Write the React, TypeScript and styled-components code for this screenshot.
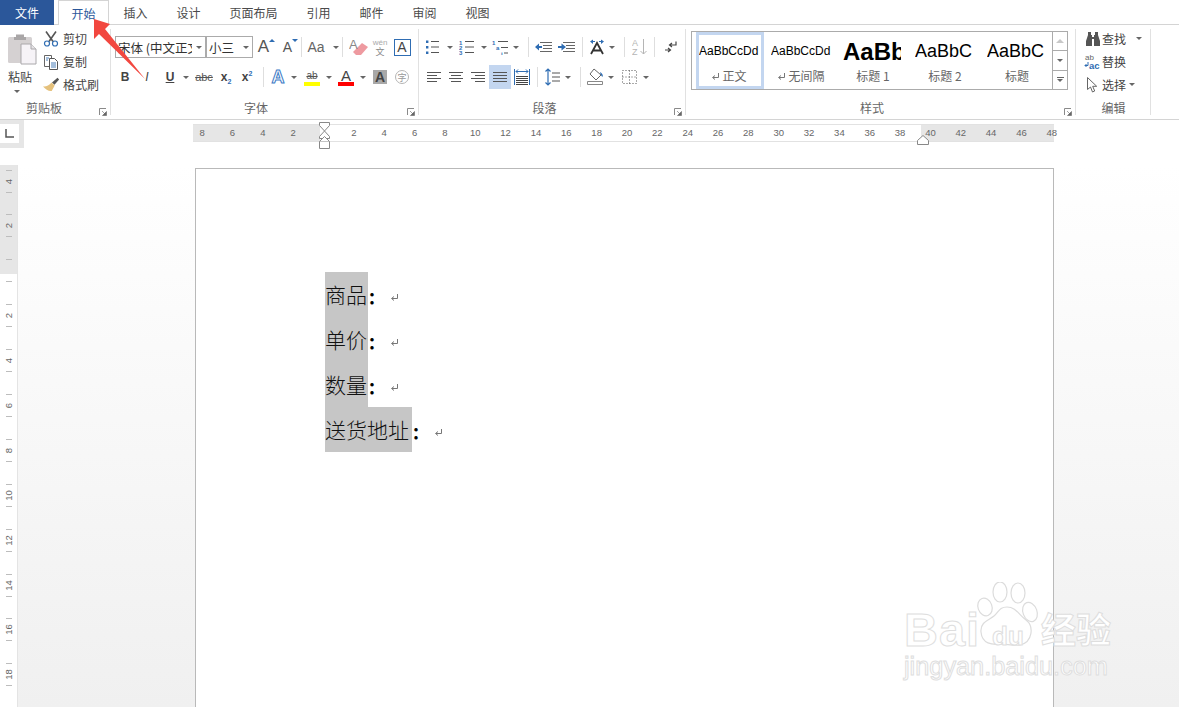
import styled, { createGlobalStyle } from "styled-components";

const CJK = `"Noto Sans CJK SC", "Liberation Sans", sans-serif`;

const hNums = ["8", "6", "4", "2", "", ...Array.from({ length: 24 }, (_, i) => String((i + 1) * 2))];
const vNums = ["4", "2", "", "2", "4", "6", "8", "10", "12", "14", "16", "18"];

const Caret = () => <CaretMark />;

const Launcher = () => (
  <LauncherBox>
    <svg width="8" height="8" viewBox="0 0 8 8">
      <path d="M.5 7V.5H7" fill="none" stroke="#8a8a8a" />
      <path d="M3 3l3 3M7.5 3.5v4h-4z" fill="#666" stroke="#666" strokeWidth=".6" />
    </svg>
  </LauncherBox>
);

const ReturnMark = () => (
  <svg width="9" height="9" viewBox="0 0 9 9">
    <path d="M7.5 1v4.5H2M4 3.5L1.5 5.5 4 7.5" fill="none" stroke="#777" />
  </svg>
);

const PasteIcon = () => (
  <svg width="30" height="32" viewBox="0 0 30 32">
    <rect x="0" y="4" width="24" height="26" rx="1.5" fill="#d5d1d2" />
    <path d="M8 4V1.500h8V4h2v3H6V4z" fill="#a9a6a7" />
    <path d="M13 11h10l5 5v15H13z" fill="#f6f3f7" stroke="#aaa8ab" />
    <path d="M23 11v5h5" fill="#e5e3e6" stroke="#aaa8ab" />
  </svg>
);

const CutIcon = () => (
  <svg width="16" height="16" viewBox="0 0 16 16">
    <path d="M3 .5l7 10M13 .5l-7 10" stroke="#555" strokeWidth="1.600" fill="none" />
    <circle cx="4" cy="12.500" r="2.500" fill="none" stroke="#2f6db3" strokeWidth="1.200" />
    <circle cx="12" cy="12.500" r="2.500" fill="none" stroke="#2f6db3" strokeWidth="1.200" />
  </svg>
);

const CopyIcon = () => (
  <svg width="16" height="16" viewBox="0 0 16 16">
    <path d="M1.500 1.500h7v11h-7z" fill="#fff" stroke="#666" />
    <path d="M6.500 4.500h5l3 3v8h-8z" fill="#fff" stroke="#555" />
    <path d="M8 9h5M8 11h5M8 13h5M3 4h3M3 6h2" stroke="#4a7fb8" />
  </svg>
);

const BrushIcon = () => (
  <svg width="18" height="16" viewBox="0 0 18 16">
    <path d="M10 5.500L15.500.8l1.600 1.700-4.600 5.200z" fill="#555" />
    <path d="M9.500 5.500l3.200 3-3 5.500c-3 .5-6-1.500-8.700-4.500 3 .5 6-1 8.500-4z" fill="#e5c17c" />
  </svg>
);

const EraserIcon = () => (
  <svg width="20" height="18" viewBox="0 0 20 18">
    <path d="M4 14l9-9 6 4-7 8H7z" fill="#ee9aa0" />
    <text x="0" y="11" fontFamily="Liberation Sans" fontSize="13" fill="#888">A</text>
  </svg>
);

const BulletIcon = () => (
  <svg width="16" height="16" viewBox="0 0 16 16">
    <path d="M1 1.500h2.400v2.400H1zM1 7h2.400v2.400H1zM1 12.500h2.400v2.400H1z" fill="#2f6db3" />
    <path d="M6 2.500h8M6 8h8M6 13.500h8" stroke="#555" />
  </svg>
);

const NumberIcon = () => (
  <svg width="16" height="16" viewBox="0 0 16 16">
    <text x="0" y="5.500" fontSize="6" fontFamily="Liberation Sans" fontWeight="700" fill="#2f6db3">1</text>
    <text x="0" y="10.500" fontSize="6" fontFamily="Liberation Sans" fontWeight="700" fill="#2f6db3">2</text>
    <text x="0" y="16" fontSize="6" fontFamily="Liberation Sans" fontWeight="700" fill="#2f6db3">3</text>
    <path d="M6 2.500h9M6 8h9M6 13.500h9" stroke="#555" />
  </svg>
);

const MultiIcon = () => (
  <svg width="18" height="16" viewBox="0 0 18 16">
    <text x="0" y="5.500" fontSize="6" fontFamily="Liberation Sans" fontWeight="700" fill="#2f6db3">1</text>
    <text x="4" y="11" fontSize="6" fontFamily="Liberation Sans" fontWeight="700" fill="#2f6db3">a</text>
    <text x="9" y="16.500" fontSize="6" fontFamily="Liberation Sans" fontWeight="700" fill="#2f6db3">i</text>
    <path d="M6 2.500h10M9 8.500h7M12 14h4" stroke="#555" />
  </svg>
);

const IndentIcon = ({ flip }: { flip?: boolean }) => (
  <svg width="18" height="12" viewBox="0 0 18 12">
    <path d="M5 1.500h12M8 4.500h9M8 7.500h9M5 10.500h12" stroke="#666" />
    {flip ? (
      <path d="M0 5h3.500V2.500L8 6l-4.500 3.500V7H0z" fill="#2f6db3" />
    ) : (
      <path d="M7 5H4V2.500L0 6l4 3.500V7h3z" fill="#2f6db3" />
    )}
  </svg>
);

const DirectionIcon = () => (
  <svg width="18" height="16" viewBox="0 0 18 16">
    <path d="M2 2.500L5 .5v1.500h2v1H5V5zM16 2.500L13 .5v1.500h-2v1h2V5z" fill="#2f6db3" />
    <path d="M3 15L9 4l6 11M5.500 11.500h7" fill="none" stroke="#333" strokeWidth="1.800" />
  </svg>
);

const SortIcon = () => (
  <svg width="16" height="18" viewBox="0 0 16 18">
    <text x="0" y="8" fontSize="9" fontFamily="Liberation Sans" fill="#b5b5b5">A</text>
    <text x="0" y="17" fontSize="9" fontFamily="Liberation Sans" fill="#b5b5b5">Z</text>
    <path d="M11.500 1v15M8.500 13l3 3 3-3" fill="none" stroke="#b5b5b5" />
  </svg>
);

const PilcrowIcon = () => (
  <svg width="14" height="14" viewBox="0 0 14 14">
    <path d="M12 1.500v3.500H6M8 3L5.500 5 8 7" fill="none" stroke="#444" strokeWidth="1.200" />
    <path d="M1 10h5M4 8l2.500 2L4 12" fill="none" stroke="#444" strokeWidth="1.200" />
  </svg>
);

const AlignIcon = ({ mode }: { mode: "left" | "center" | "right" | "justify" }) => {
  const rows: Record<string, string> = {
    left: "M0 1.500h14M0 4.500h10M0 7.500h14M0 10.500h10",
    center: "M0 1.500h14M2 4.500h10M0 7.500h14M2 10.500h10",
    right: "M0 1.500h14M4 4.500h10M0 7.500h14M4 10.500h10",
    justify: "M0 1.500h14M0 4.500h14M0 7.500h14M0 10.500h14",
  };
  return (
    <svg width="14" height="12" viewBox="0 0 14 12">
      <path d={rows[mode]} stroke="#555" />
    </svg>
  );
};

const DistributeIcon = () => (
  <svg width="16" height="16" viewBox="0 0 16 16">
    <path d="M.5 0v16M15.500 0v16" stroke="#2f6db3" />
    <path d="M2 2.500h12M4 .5L2 2.500l2 2M12 .5l2 2-2 2" fill="none" stroke="#2f6db3" />
    <path d="M2 7.500h12M2 9.500h12M2 11.500h12M2 13.500h12M2 15.500h12" stroke="#444" />
  </svg>
);

const SpacingIcon = () => (
  <svg width="16" height="18" viewBox="0 0 16 18">
    <path d="M3 1v16M.5 3.500L3 1l2.500 2.500M.5 14.500L3 17l2.500-2.500" fill="none" stroke="#2f6db3" strokeWidth="1.200" />
    <path d="M7 5h8M7 9h8M7 13h8" stroke="#555" />
  </svg>
);

const ShadeIcon = () => (
  <svg width="17" height="18" viewBox="0 0 17 18">
    <path d="M7 1l7 6-5 5-6-6z" fill="#fff" stroke="#666" />
    <path d="M13 4c2 1 3.500 3 2.500 5-1-1-2-2-2.500-5z" fill="#2f6db3" />
    <path d="M.5 13.500h15v3H.5z" fill="#fff" stroke="#888" />
  </svg>
);

const BordersIcon = () => (
  <svg width="15" height="14" viewBox="0 0 15 14">
    <path d="M.5.5h14v13H.5zM7.500.5v13M.5 7h14" fill="none" stroke="#555" strokeDasharray="1 2" />
  </svg>
);

const FindIcon = () => (
  <svg width="16" height="14" viewBox="0 0 16 14">
    <path d="M3 0h3v3h1v2h2V3h1V0h3v3l2 6v5h-6V7H7v7H1V9l2-6z" fill="#555" />
  </svg>
);

const ReplaceIcon = () => (
  <svg width="17" height="17" viewBox="0 0 17 17">
    <text x="1" y="7" fontSize="8" fontFamily="Liberation Sans" fill="#666">ab</text>
    <text x="5" y="16" fontSize="9.500" fontFamily="Liberation Sans" fontWeight="700" fill="#2f6db3">ac</text>
    <path d="M4 9v3.500H1M2.500 11L1 12.500 2.500 14" fill="none" stroke="#2f6db3" />
  </svg>
);

const SelectIcon = () => (
  <svg width="11" height="16" viewBox="0 0 11 16">
    <path d="M.5.5v12l3-2.500 2 5 2.200-1-2-4.700h4z" fill="#fff" stroke="#666" />
  </svg>
);

const App = () => {
  return (
    <Screen>
      <GlobalStyle />
      <TabBar>
        <FileTab>文件</FileTab>
        <ActiveTab>开始</ActiveTab>
        {["插入", "设计", "页面布局", "引用", "邮件", "审阅", "视图"].map((t) => (
          <Tab key={t}>{t}</Tab>
        ))}
      </TabBar>

      <Ribbon>
        <Group $w={111}>
          <ClipBody>
            <PasteCol>
              <PasteIcon />
              <PasteText>粘贴</PasteText>
              <Caret />
            </PasteCol>
            <SmallList>
              <SmallItem><IconSlot><CutIcon /></IconSlot>剪切</SmallItem>
              <SmallItem><IconSlot><CopyIcon /></IconSlot>复制</SmallItem>
              <SmallItem><IconSlot><BrushIcon /></IconSlot>格式刷</SmallItem>
            </SmallList>
          </ClipBody>
          <GroupLabel $pr={23}>剪贴板</GroupLabel>
          <Launcher />
        </Group>

        <Group $w={308}>
          <ToolBody>
            <ToolRow>
              <FontSelect $w={91}><SelectText>宋体 (中文正文)</SelectText><Caret /></FontSelect>
              <FontSelect $w={47}><SelectText>小三</SelectText><Caret /></FontSelect>
              <Tool $w={24}><BigA>A<GrowMark /></BigA></Tool>
              <Tool $w={24}><MidA>A<ShrinkMark /></MidA></Tool>
              <Sep />
              <Tool $w={28}><CaseText>Aa</CaseText></Tool>
              <Tool $w={12}><Caret /></Tool>
              <Sep $r={6} />
              <Tool $w={20}><EraserIcon /></Tool>
              <Tool $w={22}><WenBlock><span>wén</span><b>文</b></WenBlock></Tool>
              <Tool $w={22}><BoxA>A</BoxA></Tool>
            </ToolRow>
            <ToolRow>
              <Tool $w={20}><Fmt $b>B</Fmt></Tool>
              <Tool $w={24}><Fmt $i>I</Fmt></Tool>
              <Tool $w={22}><Fmt $b $u>U</Fmt></Tool>
              <Tool $w={10}><Caret /></Tool>
              <Tool $w={26}><Strike>abc</Strike></Tool>
              <Tool $w={18}><Fmt $b>x<Sub>2</Sub></Fmt></Tool>
              <Tool $w={24}><Fmt $b>x<Sup>2</Sup></Fmt></Tool>
              <Sep $l={4} $r={3} />
              <Tool $w={22}><EffectA>A</EffectA></Tool>
              <Tool $w={10}><Caret /></Tool>
              <Tool $w={26}><BarBlock><HiText>ab</HiText><Bar $c="#ffff00" /></BarBlock></Tool>
              <Tool $w={8}><Caret /></Tool>
              <Tool $w={26}><BarBlock><ColorA>A</ColorA><Bar $c="#ff0000" /></BarBlock></Tool>
              <Tool $w={7}><Caret /></Tool>
              <Tool $w={28}><ShadedA>A</ShadedA></Tool>
              <Tool $w={16}><CircleChar>字</CircleChar></Tool>
            </ToolRow>
          </ToolBody>
          <GroupLabel $pr={18}>字体</GroupLabel>
          <Launcher />
        </Group>

        <Group $w={267}>
          <ToolBody>
            <ToolRow>
              <Tool $w={20}><BulletIcon /></Tool>
              <Tool $w={14}><Caret /></Tool>
              <Tool $w={20}><NumberIcon /></Tool>
              <Tool $w={14}><Caret /></Tool>
              <Tool $w={20}><MultiIcon /></Tool>
              <Tool $w={10}><Caret /></Tool>
              <Sep $l={7} $r={4} />
              <Tool $w={22}><IndentIcon /></Tool>
              <Tool $w={24}><IndentIcon flip /></Tool>
              <Sep $l={3} $r={3} />
              <Tool $w={22}><DirectionIcon /></Tool>
              <Tool $w={8}><Caret /></Tool>
              <Sep $l={8} $r={5} />
              <Tool $w={20}><SortIcon /></Tool>
              <Sep $l={4} $r={5} />
              <Tool $w={22}><PilcrowIcon /></Tool>
            </ToolRow>
            <ToolRow>
              <Tool $w={22}><AlignIcon mode="left" /></Tool>
              <Tool $w={22}><AlignIcon mode="center" /></Tool>
              <Tool $w={22}><AlignIcon mode="right" /></Tool>
              <Tool $w={22} $on><AlignIcon mode="justify" /></Tool>
              <Tool $w={22}><DistributeIcon /></Tool>
              <Sep $l={4} $r={4} />
              <Tool $w={22}><SpacingIcon /></Tool>
              <Tool $w={8}><Caret /></Tool>
              <Sep $l={8} $r={3} />
              <Tool $w={22}><ShadeIcon /></Tool>
              <Tool $w={10}><Caret /></Tool>
              <Tool $w={26}><BordersIcon /></Tool>
              <Tool $w={8}><Caret /></Tool>
            </ToolRow>
          </ToolBody>
          <GroupLabel $pr={16}>段落</GroupLabel>
          <Launcher />
        </Group>

        <Group $w={390}>
          <Gallery>
            <StyleItem $on>
              <Preview>AaBbCcDd</Preview>
              <StyleName><ReturnMark />正文</StyleName>
            </StyleItem>
            <StyleItem>
              <Preview>AaBbCcDd</Preview>
              <StyleName><ReturnMark />无间隔</StyleName>
            </StyleItem>
            <StyleItem>
              <Preview $big>AaBb</Preview>
              <StyleName>标题 1</StyleName>
            </StyleItem>
            <StyleItem>
              <Preview $mid>AaBbC</Preview>
              <StyleName>标题 2</StyleName>
            </StyleItem>
            <StyleItem>
              <Preview $mid>AaBbC</Preview>
              <StyleName>标题</StyleName>
            </StyleItem>
            <GalleryScroll>
              <ScrollBtn><UpMark /></ScrollBtn>
              <ScrollBtn><Caret /></ScrollBtn>
              <ScrollBtn><MoreMark /><Caret /></ScrollBtn>
            </GalleryScroll>
          </Gallery>
          <GroupLabel $pr={18}>样式</GroupLabel>
          <Launcher />
        </Group>

        <Group $w={75}>
          <EditList>
            <EditItem><EditIcon><FindIcon /></EditIcon>查找<CaretGap $g={10}><Caret /></CaretGap></EditItem>
            <EditItem><EditIcon><ReplaceIcon /></EditIcon>替换</EditItem>
            <EditItem><EditIcon><SelectIcon /></EditIcon>选择<CaretGap $g={3}><Caret /></CaretGap></EditItem>
          </EditList>
          <GroupLabel $pr={0}>编辑</GroupLabel>
        </Group>
      </Ribbon>

      <RulerRow>
        <TabCorner>
          <TabStopBox>
            <svg width="9" height="9" viewBox="0 0 9 9">
              <path d="M1 0v8h8" fill="none" stroke="#555" strokeWidth="1.500" />
            </svg>
          </TabStopBox>
        </TabCorner>
        <HRuler>
          <HNumbers>
            {hNums.map((n, i) => (
              <HNum key={i}>{n}</HNum>
            ))}
          </HNumbers>
          <IndentMarker>
            <svg width="13" height="27" viewBox="0 0 13 27">
              <path d="M1.500.5h10v3l-5 5.500 5 5.500v2h-10v-2l5-5.500-5-5.500z" fill="#fff" stroke="#888" />
              <path d="M1.500 19.500h10v7h-10z" fill="#fff" stroke="#888" />
              <path d="M1.500 19.500l5-5 5 5" fill="#fff" stroke="#888" />
            </svg>
          </IndentMarker>
          <RightMarker>
            <svg width="12" height="10" viewBox="0 0 12 10">
              <path d="M.5 9.500v-4l5.500-5 5.500 5v4z" fill="#fff" stroke="#888" />
            </svg>
          </RightMarker>
        </HRuler>
      </RulerRow>

      <Main>
        <VRuler>
          <VNumbers>
            {vNums.map((n, i) => (
              <VCell key={i}>
                <VTick />
                <VNum>{n}</VNum>
                <VTick />
              </VCell>
            ))}
          </VNumbers>
        </VRuler>
        <Canvas>
          <Page>
            {[
              { text: "商品", w: 43 },
              { text: "单价", w: 43 },
              { text: "数量", w: 43 },
              { text: "送货地址", w: 87 },
            ].map((l) => (
              <DocLine key={l.text}>
                <Selected $w={l.w}>{l.text}</Selected>
                <Colon>：</Colon>
                <MarkSlot><ReturnMark /></MarkSlot>
              </DocLine>
            ))}
          </Page>
        </Canvas>
      </Main>

      <ArrowOverlay width="70" height="70" viewBox="0 0 70 70">
        <path d="M3 1l16 5-5 5 40 50-46-45-5 5z" fill="#f2473f" />
      </ArrowOverlay>

      <Watermark>
        <WmBai>Bai</WmBai>
        <WmPaw width="70" height="72" viewBox="0 0 70 72">
          <g fill="#fff" fillOpacity=".55" stroke="#dcdcdc" strokeWidth="1.200">
            <ellipse cx="9" cy="25" rx="7" ry="9" transform="rotate(-20 9 25)" />
            <ellipse cx="24" cy="10" rx="7" ry="10" />
            <ellipse cx="42" cy="11" rx="7" ry="10" />
            <ellipse cx="54" cy="30" rx="7" ry="10" transform="rotate(-20 54 30)" />
            <path d="M31 25c9 0 12 8 19 13 8 6 7 22-6 25-7 1-13-1-19-1-9 1-19 0-20-12-1-10 8-12 13-16 5-4 5-9 13-9z" />
          </g>
        </WmPaw>
        <WmDu>du</WmDu>
        <WmCn>经验</WmCn>
        <WmUrl>jingyan.baidu.com</WmUrl>
      </Watermark>
    </Screen>
  );
};

export default App;

const GlobalStyle = createGlobalStyle`
  html, body {
    margin: 0;
    height: 100%;
    overflow: hidden;
    background: #fff;
  }
  #root {
    height: 100%;
  }
`;

const Screen = styled.div`
  position: relative;
  display: flex;
  flex-direction: column;
  height: 707px;
  overflow: hidden;
  font-family: ${CJK};
  font-size: 12px;
  color: #444;
`;

const TabBar = styled.div`
  display: flex;
  height: 25px;
  box-sizing: border-box;
  border-bottom: 1px solid #d4d4d4;
`;

const FileTab = styled.div`
  width: 54px;
  height: 25px;
  display: flex;
  align-items: center;
  justify-content: center;
  background: #2b579a;
  color: #fff;
`;

const ActiveTab = styled.div`
  width: 51px;
  height: 25px;
  margin-left: 4px;
  box-sizing: border-box;
  display: flex;
  align-items: center;
  justify-content: center;
  color: #2b579a;
  background: #fff;
  border: 1px solid #d4d4d4;
  border-bottom: none;
`;

const Tab = styled.div`
  display: flex;
  align-items: center;
  padding: 0 14.5px;
  height: 24px;
  color: #4a4a4a;
`;

const Ribbon = styled.div`
  display: flex;
  height: 95px;
  box-sizing: border-box;
  border-bottom: 1px solid #d4d4d4;
`;

const Group = styled.div<{ $w: number }>`
  position: relative;
  width: ${(p) => p.$w}px;
  display: flex;
  flex-direction: column;
  justify-content: space-between;
  &::after {
    content: "";
    position: absolute;
    top: 4px;
    bottom: 4px;
    right: 0;
    width: 1px;
    background: #e1e1e1;
  }
`;

const GroupLabel = styled.div<{ $pr: number }>`
  height: 16px;
  line-height: 16px;
  margin-bottom: 3px;
  padding-right: ${(p) => p.$pr}px;
  text-align: center;
  color: #666;
`;

const LauncherBox = styled.div`
  position: absolute;
  right: 4px;
  bottom: 3px;
  width: 8px;
  height: 8px;
  display: flex;
`;

const ClipBody = styled.div`
  display: flex;
`;

const PasteCol = styled.div`
  width: 42px;
  padding: 8px 0 0 8px;
  box-sizing: border-box;
  display: flex;
  flex-direction: column;
  align-items: flex-start;
`;

const PasteText = styled.div`
  width: 24px;
  margin: 3px 0 5px;
  line-height: 17px;
  color: #444;
`;

const SmallList = styled.div`
  padding-top: 2px;
  display: flex;
  flex-direction: column;
`;

const SmallItem = styled.div`
  height: 23px;
  display: flex;
  align-items: center;
  gap: 3px;
`;

const IconSlot = styled.span`
  width: 18px;
  display: flex;
  justify-content: center;
`;

const CaretMark = styled.i`
  display: inline-block;
  width: 0;
  height: 0;
  margin-left: 6px;
  border-left: 3px solid transparent;
  border-right: 3px solid transparent;
  border-top: 3px solid #666;
  flex: none;
`;

const ToolBody = styled.div`
  padding: 10px 0 0 4px;
  display: flex;
  flex-direction: column;
  gap: 6px;
`;

const ToolRow = styled.div`
  display: flex;
  height: 24px;
  align-items: center;
`;

const Tool = styled.div<{ $w: number; $on?: boolean }>`
  width: ${(p) => p.$w}px;
  height: 24px;
  flex: none;
  display: flex;
  align-items: center;
  justify-content: center;
  background: ${(p) => (p.$on ? "#c3d6f0" : "transparent")};
  & > ${CaretMark} {
    margin-left: 0;
  }
`;

const Sep = styled.div<{ $l?: number; $r?: number }>`
  width: 1px;
  height: 20px;
  flex: none;
  background: #dedede;
  margin-left: ${(p) => p.$l ?? 0}px;
  margin-right: ${(p) => p.$r ?? 0}px;
`;

const FontSelect = styled.div<{ $w: number }>`
  width: ${(p) => p.$w}px;
  height: 22px;
  box-sizing: border-box;
  flex: none;
  display: flex;
  align-items: center;
  padding: 0 3px 0 2px;
  border: 1px solid #ababab;
  ${CaretMark} {
    margin-left: 4px;
  }
`;

const SelectText = styled.span`
  flex: 1;
  min-width: 0;
  overflow: hidden;
  white-space: nowrap;
  font-size: 12.5px;
  color: #333;
`;

const BigA = styled.span`
  position: relative;
  font: 17px "Liberation Sans", sans-serif;
  color: #555;
  padding-right: 3px;
`;

const MidA = styled(BigA)`
  font-size: 14px;
`;

const GrowMark = styled.i`
  position: absolute;
  right: -3px;
  top: 2px;
  border-left: 3px solid transparent;
  border-right: 3px solid transparent;
  border-bottom: 3px solid #2f6db3;
`;

const ShrinkMark = styled.i`
  position: absolute;
  right: -3px;
  top: 0;
  border-left: 3px solid transparent;
  border-right: 3px solid transparent;
  border-top: 3px solid #2f6db3;
`;

const CaseText = styled.span`
  font: 14px "Liberation Sans", sans-serif;
  color: #666;
`;

const WenBlock = styled.div`
  display: flex;
  flex-direction: column;
  align-items: center;
  line-height: 9px;
  color: #aaa;
  span {
    font: 8px "Liberation Sans", sans-serif;
    line-height: 9px;
  }
  b {
    font-size: 9px;
    font-weight: 400;
    line-height: 10px;
    color: #888;
  }
`;

const BoxA = styled.span`
  width: 15px;
  height: 15px;
  display: flex;
  align-items: center;
  justify-content: center;
  border: 1px solid #2f6db3;
  font: 14px "Liberation Sans", sans-serif;
  color: #444;
`;

const Fmt = styled.span<{ $b?: boolean; $i?: boolean; $u?: boolean }>`
  font-family: "Liberation Sans", sans-serif;
  font-size: 12px;
  color: #444;
  font-weight: ${(p) => (p.$b ? 700 : 400)};
  font-style: ${(p) => (p.$i ? "italic" : "normal")};
  text-decoration: ${(p) => (p.$u ? "underline" : "none")};
`;

const Strike = styled.span`
  font: 11px "Liberation Sans", sans-serif;
  color: #555;
  text-decoration: line-through;
`;

const Sub = styled.sub`
  font-size: 7px;
  color: #2f6db3;
  line-height: 0;
`;

const Sup = styled.sup`
  font-size: 7px;
  color: #2f6db3;
  line-height: 0;
`;

const EffectA = styled.span`
  font: 700 18px "Liberation Sans", sans-serif;
  color: #fff;
  -webkit-text-stroke: 1px #3c7bc6;
`;

const BarBlock = styled.div`
  display: flex;
  flex-direction: column;
  align-items: center;
  width: 16px;
`;

const HiText = styled.span`
  font: 10px/13px "Liberation Sans", sans-serif;
  color: #555;
  text-decoration: line-through;
`;

const ColorA = styled.span`
  font: 15px/13px "Liberation Sans", sans-serif;
  color: #444;
`;

const Bar = styled.i<{ $c: string }>`
  display: block;
  width: 16px;
  height: 4px;
  background: ${(p) => p.$c};
`;

const ShadedA = styled.span`
  width: 14px;
  height: 14px;
  display: flex;
  align-items: center;
  justify-content: center;
  background: #a8a8a8;
  font: 700 14px "Liberation Sans", sans-serif;
  color: #444;
`;

const CircleChar = styled.span`
  width: 14px;
  height: 14px;
  display: flex;
  align-items: center;
  justify-content: center;
  box-sizing: border-box;
  border: 1px solid #b5b5b5;
  border-radius: 50%;
  font-size: 9px;
  color: #999;
`;

const Gallery = styled.div`
  margin: 6px 0 0 5px;
  width: 377px;
  height: 59px;
  box-sizing: border-box;
  padding: 0 0 0 4px;
  display: flex;
  gap: 4px;
  border: 1px solid #ababab;
  align-items: center;
`;

const StyleItem = styled.div<{ $on?: boolean }>`
  width: 68px;
  height: 57px;
  box-sizing: border-box;
  flex: none;
  padding: ${(p) => (p.$on ? "0" : "3px 0 0 3px")};
  border: ${(p) => (p.$on ? "3px solid #c3d6f0" : "none")};
  display: flex;
  flex-direction: column;
`;

const Preview = styled.div<{ $big?: boolean; $mid?: boolean }>`
  width: ${(p) => (p.$big ? 58 : 62)}px;
  height: 33px;
  line-height: 33px;
  overflow: hidden;
  white-space: nowrap;
  color: #000;
  font-family: "Liberation Sans", sans-serif;
  font-size: ${(p) => (p.$big ? 24 : p.$mid ? 18 : 12)}px;
  font-weight: ${(p) => (p.$big ? 700 : 400)};
`;

const StyleName = styled.div`
  width: 60px;
  height: 16px;
  line-height: 16px;
  display: flex;
  align-items: center;
  justify-content: center;
  gap: 2px;
  color: #666;
  white-space: nowrap;
`;

const GalleryScroll = styled.div`
  width: 14px;
  margin-left: -4px;
  height: 100%;
  flex: none;
  display: flex;
  flex-direction: column;
  border-left: 1px solid #ababab;
`;

const ScrollBtn = styled.div`
  flex: 1;
  display: flex;
  flex-direction: column;
  align-items: center;
  justify-content: center;
  gap: 1px;
  & + & {
    border-top: 1px solid #ababab;
  }
  ${CaretMark} {
    margin-left: 0;
  }
`;

const UpMark = styled.i`
  border-left: 4px solid transparent;
  border-right: 4px solid transparent;
  border-bottom: 4px solid #c8c8c8;
`;

const MoreMark = styled.i`
  width: 7px;
  height: 1px;
  background: #666;
`;

const EditList = styled.div`
  padding: 2px 0 0 7px;
  display: flex;
  flex-direction: column;
`;

const EditItem = styled.div`
  height: 23px;
  display: flex;
  align-items: center;
`;

const EditIcon = styled.span`
  width: 19px;
  display: flex;
  justify-content: center;
`;

const CaretGap = styled.span<{ $g: number }>`
  display: flex;
  margin-left: ${(p) => p.$g - 6}px;
`;

const RulerRow = styled.div`
  display: flex;
  height: 45px;
  flex: none;
`;

const TabCorner = styled.div`
  width: 24px;
  height: 28px;
  background: #e6e6e6;
  padding-top: 4px;
  box-sizing: border-box;
`;

const TabStopBox = styled.div`
  width: 19px;
  height: 19px;
  background: #fff;
  display: flex;
  align-items: center;
  justify-content: center;
`;

const HRuler = styled.div`
  position: relative;
  width: 861px;
  height: 18px;
  margin: 4px 0 0 169px;
  box-sizing: border-box;
  border-top: 1px solid #e2e2e2;
  border-bottom: 1px solid #e2e2e2;
  background: linear-gradient(
    90deg,
    #e6e6e6 0,
    #e6e6e6 127px,
    #fff 127px,
    #fff 728px,
    #e6e6e6 728px
  );
`;

const HNumbers = styled.div`
  display: flex;
  margin-left: -6px;
`;

const HNum = styled.span`
  width: 30.35px;
  flex: none;
  text-align: center;
  font: 9.5px/16px "Liberation Sans", sans-serif;
  color: #666;
`;

const IndentMarker = styled.div`
  position: absolute;
  left: 125px;
  top: -3px;
  display: flex;
`;

const RightMarker = styled.div`
  position: absolute;
  left: 724px;
  top: 10px;
  display: flex;
`;

const Main = styled.div`
  flex: 1;
  min-height: 0;
  display: flex;
`;

const VRuler = styled.div`
  width: 18px;
  flex: none;
  overflow: hidden;
  box-sizing: border-box;
  border-right: 1px solid #e4e4e4;
  background: linear-gradient(180deg, #e6e6e6 0, #e6e6e6 109px, #fff 109px);
`;

const VNumbers = styled.div`
  margin-top: -6.45px;
  display: flex;
  flex-direction: column;
`;

const VCell = styled.div`
  height: 44.9px;
  flex: none;
  display: flex;
  flex-direction: column;
  align-items: center;
  justify-content: center;
  gap: 5px;
`;

const VTick = styled.i`
  display: block;
  width: 6px;
  height: 1px;
  background: #bdbdbd;
  flex: none;
`;

const VNum = styled.span`
  height: 11px;
  width: 11px;
  flex: none;
  display: flex;
  align-items: center;
  justify-content: center;
  transform: rotate(-90deg);
  font: 9.5px "Liberation Sans", sans-serif;
  color: #666;
`;

const Canvas = styled.div`
  flex: 1;
  min-width: 0;
  display: flex;
  padding: 3px 0 0 177px;
  background: linear-gradient(180deg, #fff 0, #f0f0f0 100%);
`;

const Page = styled.div`
  width: 859px;
  box-sizing: border-box;
  padding: 103px 0 0 129px;
  background: #fff;
  border: 1px solid #b9b9b9;
  border-bottom: none;
`;

const DocLine = styled.div`
  height: 45px;
  display: flex;
  align-items: center;
  font-size: 21px;
  color: #111;
  font-weight: 300;
  font-family: "Noto Sans CJK SC", "Liberation Serif", serif;
`;

const Selected = styled.span<{ $w: number }>`
  width: ${(p) => p.$w}px;
  height: 45px;
  line-height: 45px;
  background: #c6c6c6;
  white-space: nowrap;
`;

const Colon = styled.span`
  width: 21px;
  flex: none;
  padding-top: 5px;
  font-size: 16px;
  line-height: 18px;
  font-weight: 900;
  color: #000;
`;

const MarkSlot = styled.span`
  display: flex;
  margin: 5px 0 0 1px;
`;

const ArrowOverlay = styled.svg`
  position: absolute;
  left: 91px;
  top: 18px;
`;

const Watermark = styled.div`
  position: absolute;
  left: 904px;
  top: 582px;
  width: 220px;
  height: 105px;
`;

const outlined = `
  color: #fff;
  -webkit-text-stroke: 1px #dedede;
  white-space: nowrap;
  line-height: 1;
  position: absolute;
`;

const WmBai = styled.span`
  ${outlined}
  left: 0;
  top: 24px;
  font: 700 47px/1 "Liberation Sans", sans-serif;
  letter-spacing: 1px;
`;

const WmPaw = styled.svg`
  position: absolute;
  left: 72px;
  top: 0;
`;

const WmDu = styled.span`
  ${outlined}
  left: 88px;
  top: 41px;
  font: 700 26px/1 "Liberation Sans", sans-serif;
`;

const WmCn = styled.span`
  ${outlined}
  left: 137px;
  top: 28px;
  font: 700 35px/1 ${CJK};
`;

const WmUrl = styled.span`
  ${outlined}
  left: 0;
  top: 72px;
  font: 400 25.3px/1 "Liberation Sans", sans-serif;
`;
